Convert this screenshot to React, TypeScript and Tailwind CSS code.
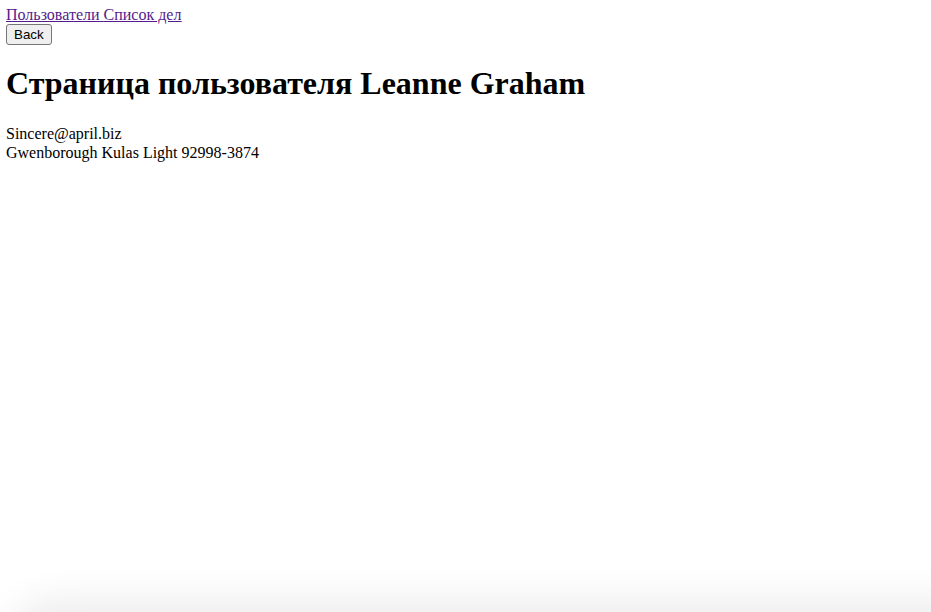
import React from "react";

const user = {
  name: "Leanne Graham",
  email: "Sincere@april.biz",
  address: { city: "Gwenborough", street: "Kulas Light", zipcode: "92998-3874" },
};

export default function App() {
  return (
    <div className="min-h-screen overflow-hidden bg-white p-[6px] font-['Liberation_Serif',serif] text-[16px] leading-[18px] text-black">
      <nav className="w-fit text-[#551a8b] underline">
        <a href="#">Пользователи</a> <a href="#">Список дел</a>
      </nav>
      <button className="rounded-[3px] border border-[#767676] bg-[#efefef] px-[7px] py-[2px] font-['Liberation_Sans',sans-serif] text-[13.33px] leading-[15px]">
        Back
      </button>
      <h1 className="mb-[22px] mt-[20px] text-[32px] font-bold leading-[37px]">
        Страница пользователя {user.name}
      </h1>
      <div className="leading-[19px]">{user.email}</div>
      <div className="leading-[19px]">
        {user.address.city} {user.address.street} {user.address.zipcode}
      </div>
      <div className="pointer-events-none fixed bottom-[-30px] left-[24px] right-[-30px] h-[30px] rounded-tl-[30px] bg-white shadow-[0_0_36px_14px_rgba(0,0,0,0.07)]" />
    </div>
  );
}
